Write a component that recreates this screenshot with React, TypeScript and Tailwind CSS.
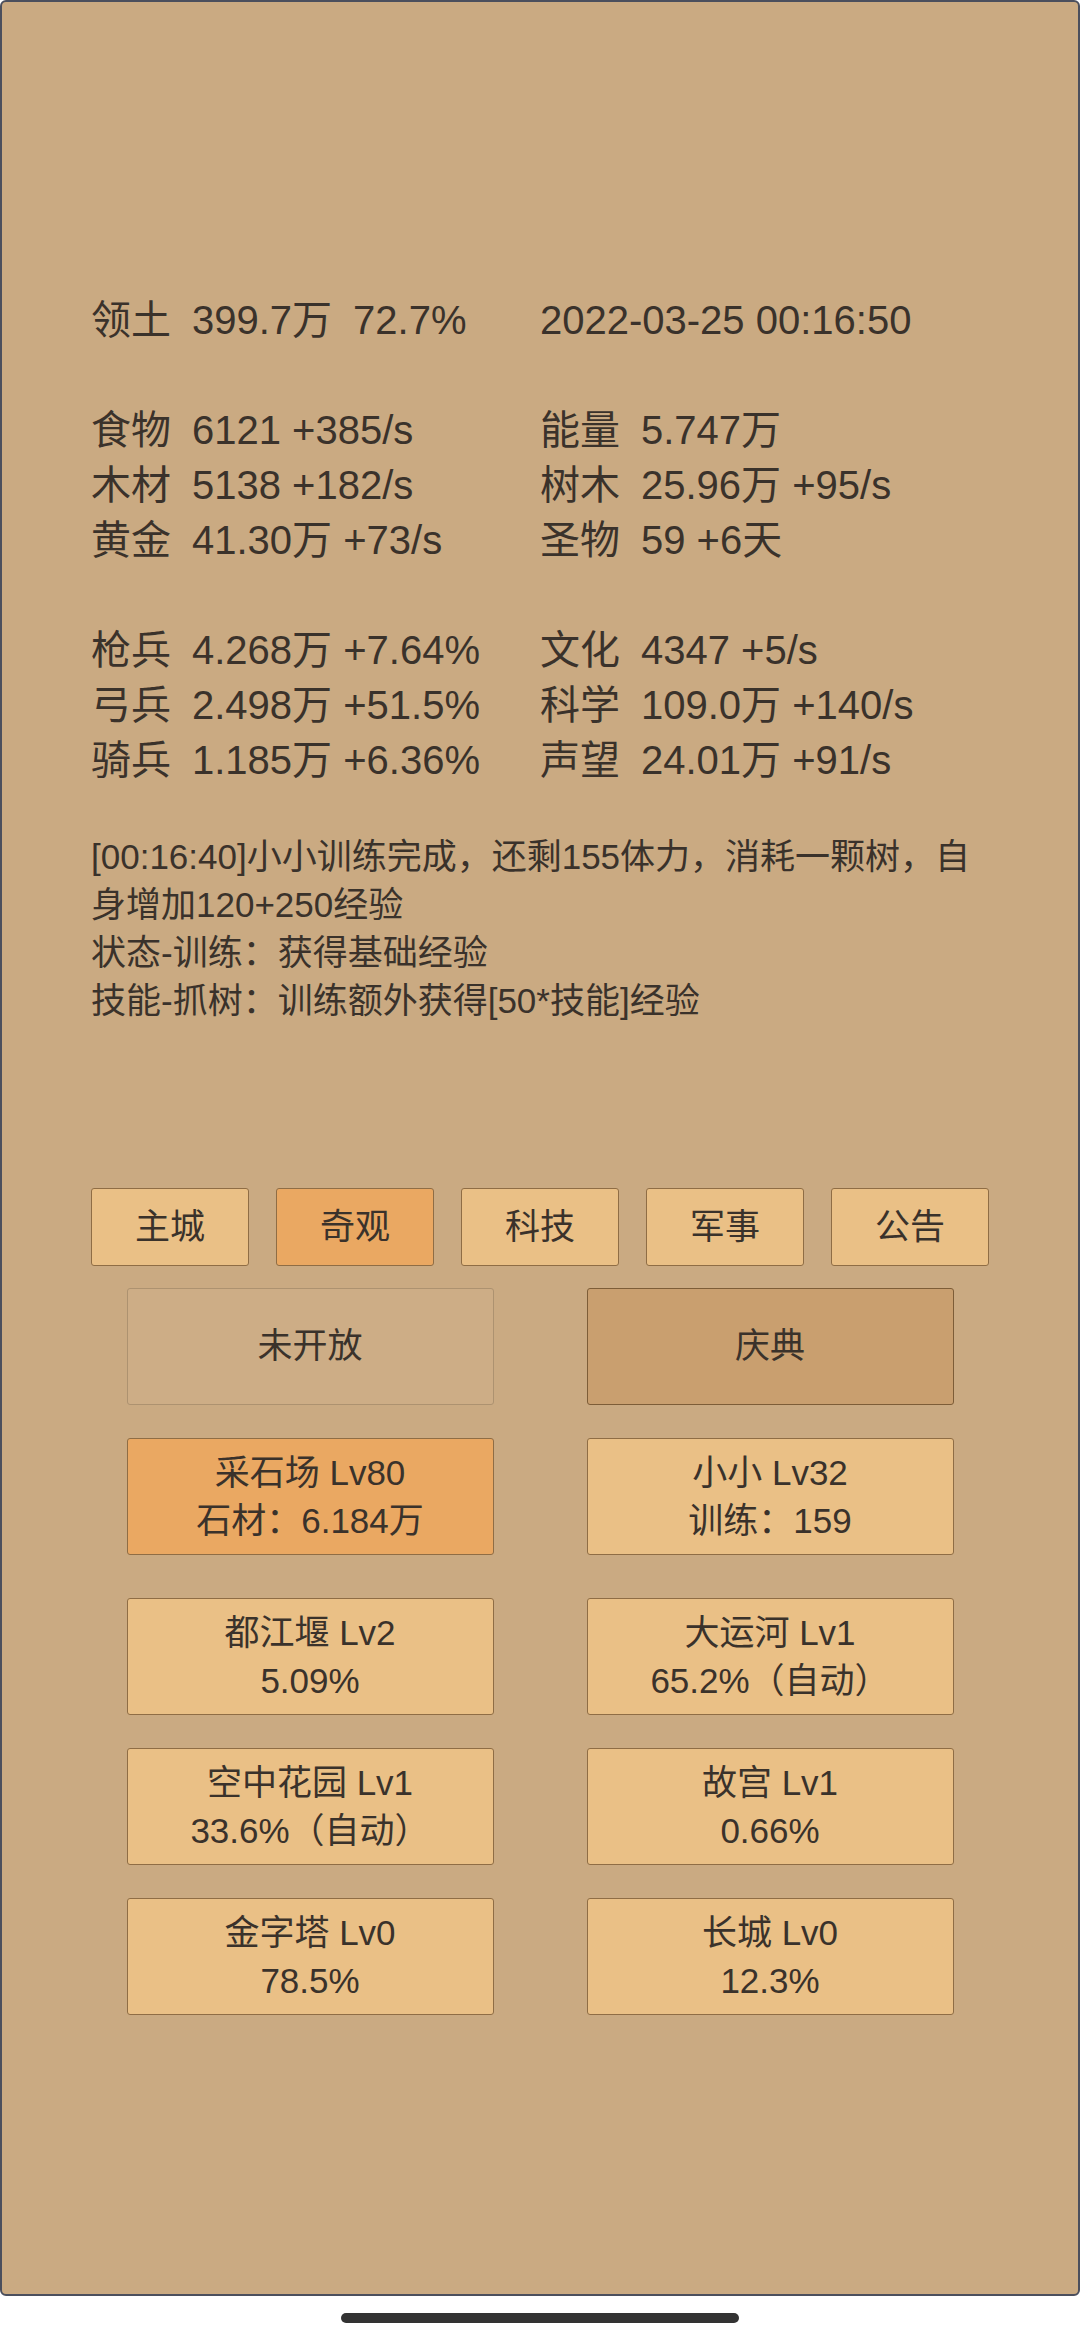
const stats: [string, string[], string, string[]][] = [
  ["食物", ["6121 +385/s"], "能量", ["5.747万"]],
  ["木材", ["5138 +182/s"], "树木", ["25.96万 +95/s"]],
  ["黄金", ["41.30万 +73/s"], "圣物", ["59 +6天"]],
];

const army: [string, string[], string, string[]][] = [
  ["枪兵", ["4.268万 +7.64%"], "文化", ["4347 +5/s"]],
  ["弓兵", ["2.498万 +51.5%"], "科学", ["109.0万 +140/s"]],
  ["骑兵", ["1.185万 +6.36%"], "声望", ["24.01万 +91/s"]],
];

const tabs = ["主城", "奇观", "科技", "军事", "公告"];

const wonders = [
  ["都江堰 Lv2", "5.09%"],
  ["大运河 Lv1", "65.2%（自动）"],
  ["空中花园 Lv1", "33.6%（自动）"],
  ["故宫 Lv1", "0.66%"],
  ["金字塔 Lv0", "78.5%"],
  ["长城 Lv0", "12.3%"],
];

function Stat({ label, values }: { label: string; values: string[] }) {
  return (
    <div className="flex h-[55px] items-center gap-[21px] whitespace-nowrap">
      <span>{label}</span>
      {values.map((v) => (
        <span key={v}>{v}</span>
      ))}
    </div>
  );
}

function StatBlock({ rows }: { rows: [string, string[], string, string[]][] }) {
  return (
    <div className="grid grid-cols-[449px_1fr]">
      {rows.map(([a, av, b, bv]) => (
        <div key={a} className="contents">
          <Stat label={a} values={av} />
          <Stat label={b} values={bv} />
        </div>
      ))}
    </div>
  );
}

function Card({ lines, active }: { lines: string[]; active?: boolean }) {
  return (
    <div
      className={`flex h-[117px] w-[367px] flex-col items-center justify-center rounded-[3px] border border-[#8f6d45] text-[35px] leading-[48px] ${
        active ? "bg-[#eaa862]" : "bg-[#eac086]"
      }`}
    >
      {lines.map((l) => (
        <span key={l}>{l}</span>
      ))}
    </div>
  );
}

export default function App() {
  return (
    <div
      className="h-[2340px] w-[1080px] bg-white text-[#3a322b]"
      style={{ fontFamily: '"Liberation Sans", "Noto Sans CJK SC", sans-serif' }}
    >
      <div className="h-[2296px] rounded-[6px] border-2 border-[#4b4f5d] bg-[#caaa82] pt-[290px]">
        <div className="px-[89px] text-[40px]">
          <div className="grid grid-cols-[449px_1fr]">
            <Stat label="领土" values={["399.7万", "72.7%"]} />
            <div className="flex h-[55px] items-center">2022-03-25 00:16:50</div>
          </div>
          <div className="h-[55px]" />
          <StatBlock rows={stats} />
          <div className="h-[55px]" />
          <StatBlock rows={army} />
        </div>

        <div className="mt-[46px] px-[89px] text-[35px] leading-[48px]">
          <p>[00:16:40]小小训练完成，还剩155体力，消耗一颗树，自身增加120+250经验</p>
          <p>状态-训练：获得基础经验</p>
          <p>技能-抓树：训练额外获得[50*技能]经验</p>
        </div>

        <div className="mt-[163px] flex justify-between px-[89px]">
          {tabs.map((t) => (
            <div
              key={t}
              className={`flex h-[78px] w-[158px] items-center justify-center rounded-[3px] border border-[#8f6d45] text-[35px] ${
                t === "奇观" ? "bg-[#eaa862]" : "bg-[#eac086]"
              }`}
            >
              {t}
            </div>
          ))}
        </div>

        <div className="mt-[22px] flex justify-center gap-[93px]">
          <div className="flex h-[117px] w-[367px] items-center justify-center rounded-[3px] border border-[#ad9270] bg-[#cdad86] text-[35px]">
            未开放
          </div>
          <div className="flex h-[117px] w-[367px] items-center justify-center rounded-[3px] border border-[#7d5d38] bg-[#c99f6f] text-[35px]">
            庆典
          </div>
        </div>

        <div className="mt-[33px] flex justify-center gap-[93px]">
          <Card lines={["采石场 Lv80", "石材：6.184万"]} active />
          <Card lines={["小小 Lv32", "训练：159"]} />
        </div>

        <div className="mt-[43px] grid grid-cols-[367px_367px] justify-center gap-x-[93px] gap-y-[33px]">
          {wonders.map((w) => (
            <Card key={w[0]} lines={w} />
          ))}
        </div>
      </div>
      <div className="mx-auto mt-[17px] h-[10px] w-[398px] rounded-full bg-[#333333]" />
    </div>
  );
}
